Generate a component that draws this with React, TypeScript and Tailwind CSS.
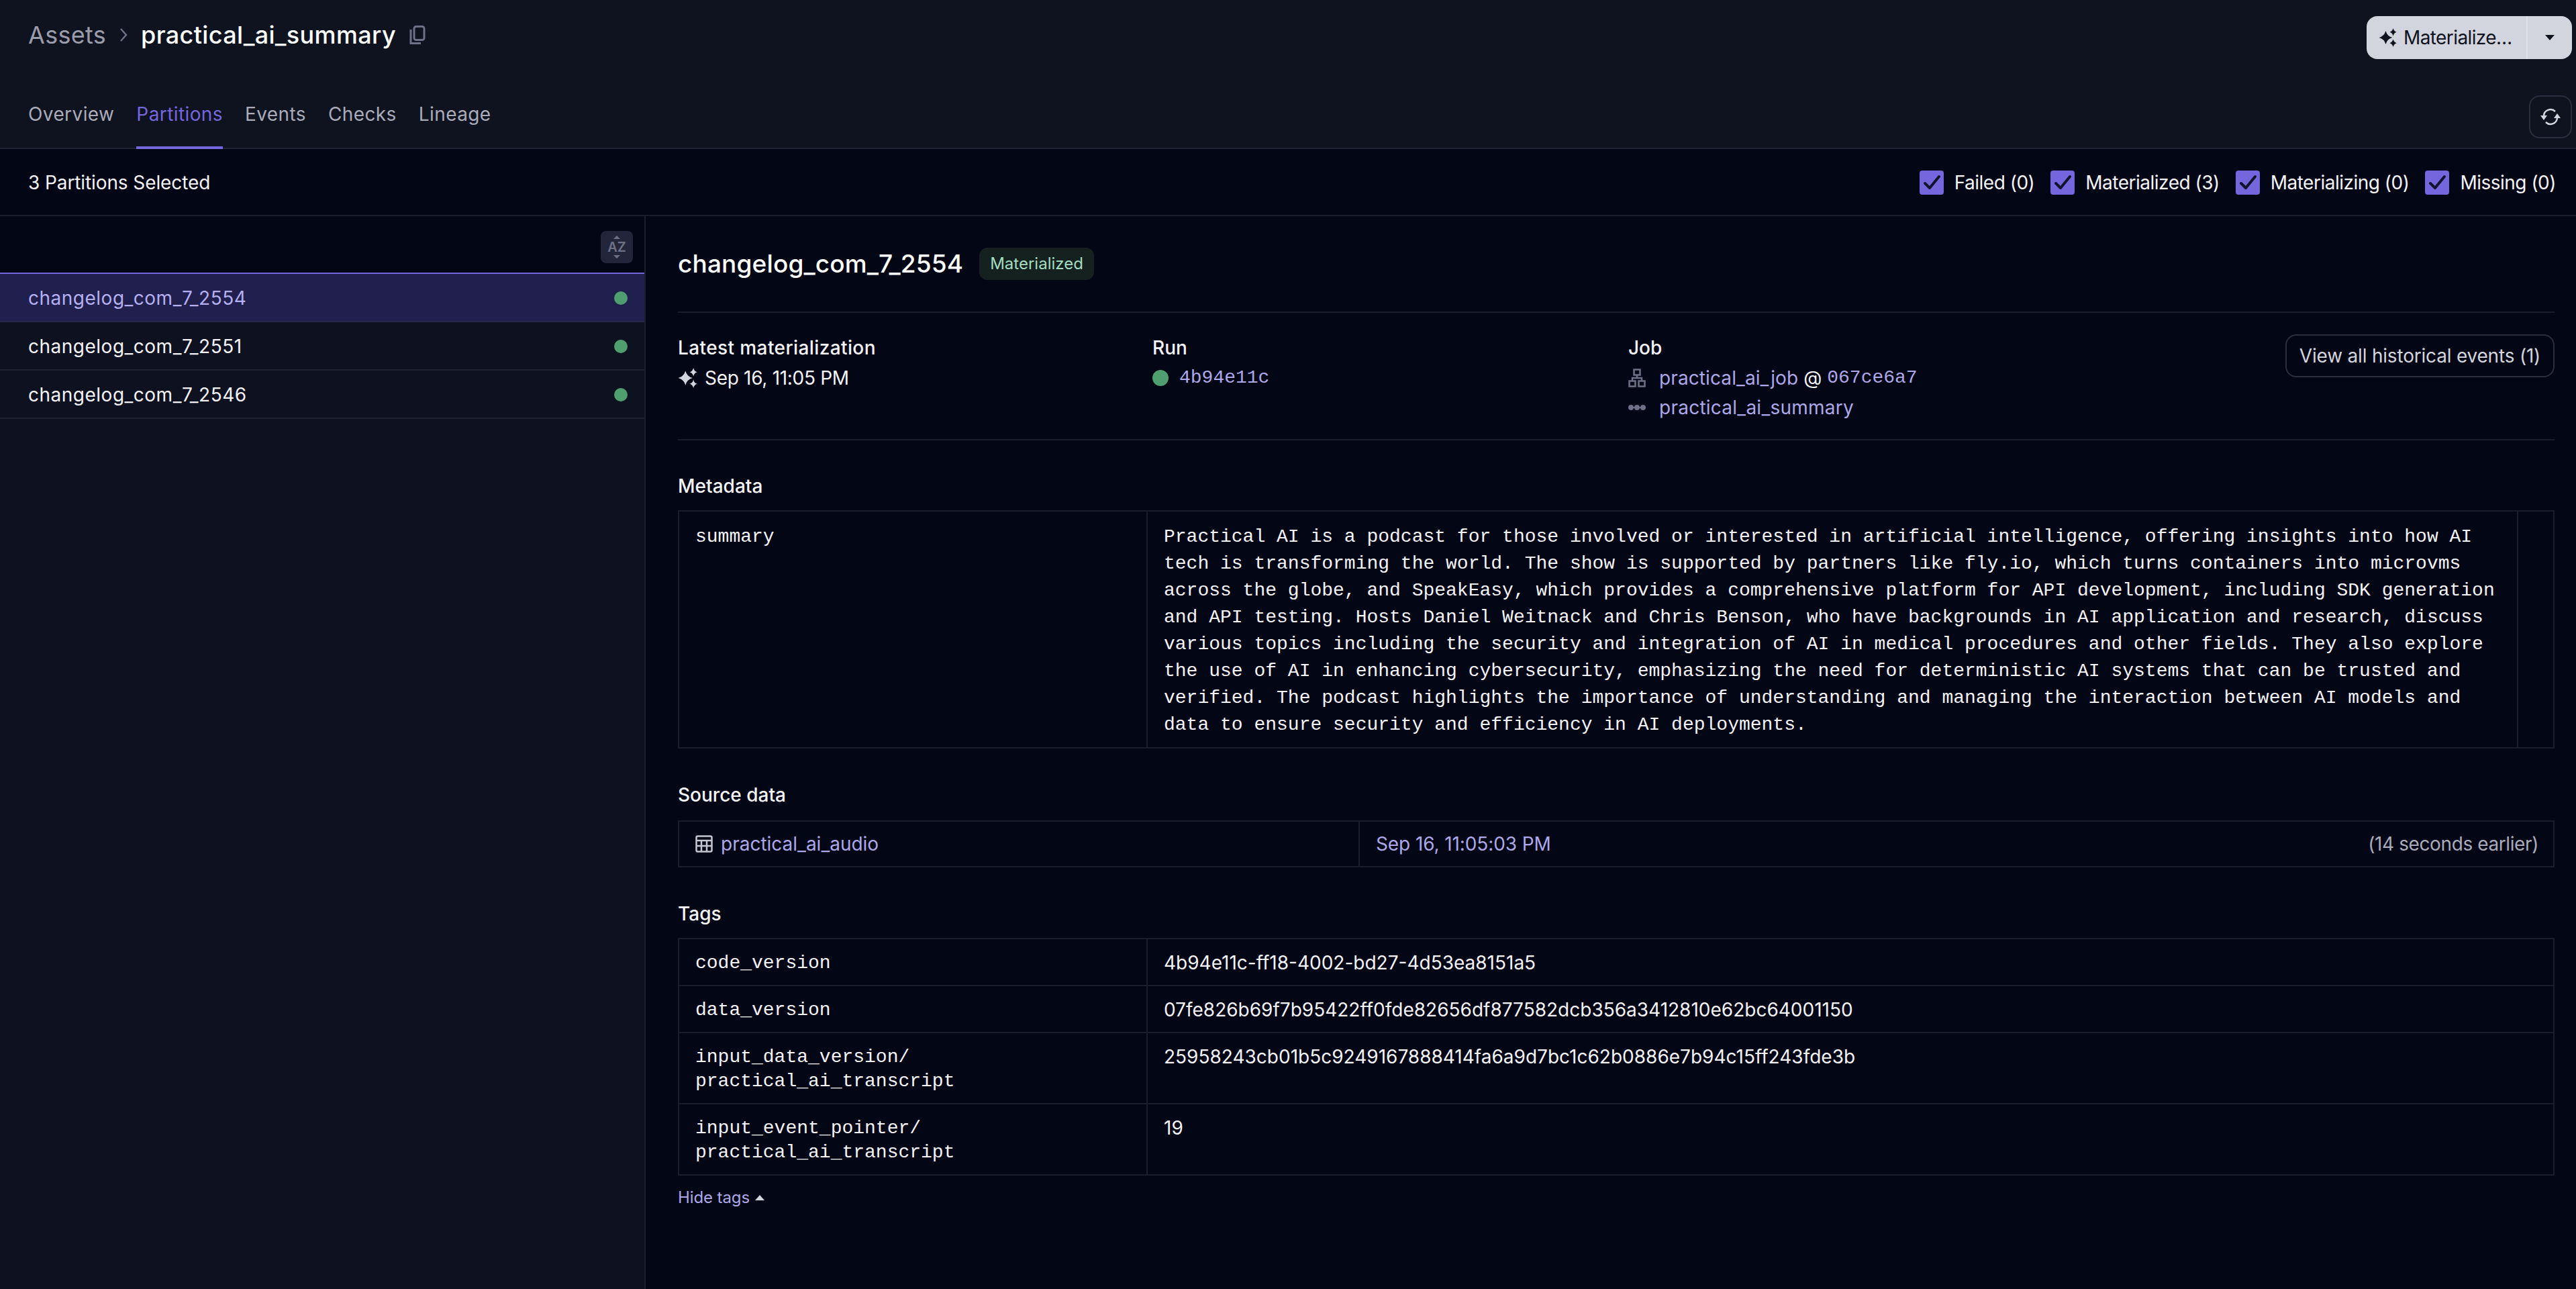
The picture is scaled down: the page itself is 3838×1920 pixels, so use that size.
const summary =
  "Practical AI is a podcast for those involved or interested in artificial intelligence, offering insights into how AI tech is transforming the world. The show is supported by partners like fly.io, which turns containers into microvms across the globe, and SpeakEasy, which provides a comprehensive platform for API development, including SDK generation and API testing. Hosts Daniel Weitnack and Chris Benson, who have backgrounds in AI application and research, discuss various topics including the security and integration of AI in medical procedures and other fields. They also explore the use of AI in enhancing cybersecurity, emphasizing the need for deterministic AI systems that can be trusted and verified. The podcast highlights the importance of understanding and managing the interaction between AI models and data to ensure security and efficiency in AI deployments.";

const tabs = ["Overview", "Partitions", "Events", "Checks", "Lineage"];
const filters = ["Failed (0)", "Materialized (3)", "Materializing (0)", "Missing (0)"];
const partitions = ["changelog_com_7_2554", "changelog_com_7_2551", "changelog_com_7_2546"];
const tags = [
  { key: ["code_version"], value: "4b94e11c-ff18-4002-bd27-4d53ea8151a5" },
  { key: ["data_version"], value: "07fe826b69f7b95422ff0fde82656df877582dcb356a3412810e62bc64001150" },
  { key: ["input_data_version/", "practical_ai_transcript"], value: "25958243cb01b5c9249167888414fa6a9d7bc1c62b0886e7b94c15ff243fde3b" },
  { key: ["input_event_pointer/", "practical_ai_transcript"], value: "19" },
];

const mono = "font-['Liberation_Mono',monospace] text-[28px]";

function Sparkle({ className }: { className: string }) {
  return (
    <svg viewBox="0 0 24 24" fill="currentColor" className={className}>
      <path d="M9 3.5 Q10.8 10.2 17.5 12 Q10.8 13.8 9 20.5 Q7.2 13.8 0.5 12 Q7.2 10.2 9 3.5Z" />
      <path d="M18.5 0 Q19.4 4.1 23 5 Q19.4 5.9 18.5 10 Q17.6 5.9 14 5 Q17.6 4.1 18.5 0Z" />
      <path d="M18.5 14 Q19.4 18.1 23 19 Q19.4 19.9 18.5 24 Q17.6 19.9 14 19 Q17.6 18.1 18.5 14Z" />
    </svg>
  );
}

function Check() {
  return (
    <div className="flex h-9 w-9 items-center justify-center rounded-[4px] bg-[#7566de]">
      <svg viewBox="0 0 36 36" fill="none" className="h-9 w-9">
        <path d="M8 19 L15 26 L29 9" stroke="#11142a" strokeWidth="4" strokeLinecap="round" strokeLinejoin="round" />
      </svg>
    </div>
  );
}

export default function App() {
  return (
    <div className="flex h-[1920px] w-[3838px] flex-col overflow-hidden bg-[#030614] font-['Inter',sans-serif] text-[28px] text-[#f3f3f7]">
      <header className="h-[222px] border-b-2 border-[#1f2231] bg-[#0f1320]">
        <div className="flex h-[122px] items-start justify-between pl-[42px] pr-[6px] pt-6">
          <div className="flex h-14 items-center text-[36px]">
            <span className="tracking-[0.3px] text-[#9a9cab]">Assets</span>
            <svg viewBox="0 0 14 24" fill="none" className="mx-[19px] h-6 w-[14px]">
              <path d="M3 3 L11 12 L3 21" stroke="#6c7187" strokeWidth="2.5" />
            </svg>
            <span className="font-medium tracking-[0.35px] text-white">practical_ai_summary</span>
            <svg viewBox="0 0 24 28" fill="none" stroke="#6c7187" strokeWidth="3" className="ml-[20px] h-7 w-6">
              <rect x="7" y="1.5" width="15" height="20" rx="3" />
              <path d="M2 6 V26.5 H17" />
            </svg>
          </div>
          <div className="flex h-16 w-[306px] rounded-2xl bg-[#d2d5dd] text-[#0f1320]">
            <div className="flex w-[240px] items-center gap-[9px] border-r-2 border-[#dfe1e7] pl-[18px]">
              <Sparkle className="h-7 w-7 shrink-0" />
              <span className="tracking-[-0.6px]">Materialize…</span>
            </div>
            <div className="flex flex-1 items-center justify-center">
              <svg viewBox="0 0 14 8" fill="currentColor" className="h-2 w-[14px]">
                <path d="M0 0 H14 L7 8Z" />
              </svg>
            </div>
          </div>
        </div>
        <div className="flex h-[98px] items-end justify-between pl-[42px] pr-[6px]">
          <div className="flex gap-[33px] tracking-[0.4px]">
            {tabs.map((tab) => (
              <div
                key={tab}
                className={
                  tab === "Partitions"
                    ? "-mb-[2px] flex h-[100px] items-center border-b-4 border-[#7566de] text-[#7566de]"
                    : "-mb-[2px] flex h-[100px] items-center border-b-4 border-transparent text-[#a9abba]"
                }
              >
                {tab}
              </div>
            ))}
          </div>
          <div className="mb-[14px] flex h-16 w-16 items-center justify-center rounded-2xl border-2 border-[#2b2e3f]">
            <svg viewBox="0 0 32 28" fill="none" className="h-7 w-8">
              <path d="M6 13 A10 10 0 0 1 23 6" stroke="#d2d5dd" strokeWidth="2.5" />
              <path d="M26 15 A10 10 0 0 1 9 22" stroke="#d2d5dd" strokeWidth="2.5" />
              <path d="M1 12 H11 L6 19Z M21 16 H31 L26 9Z" fill="#d2d5dd" />
            </svg>
          </div>
        </div>
      </header>

      <div className="flex h-[100px] items-center justify-between border-b-2 border-[#1a1d2b] pl-[42px] pr-[30px] pt-[2px]">
        <span className="tracking-[-0.1px]">3 Partitions Selected</span>
        <div className="flex gap-6 tracking-[-0.5px]">
          {filters.map((label) => (
            <div key={label} className="flex items-center gap-4">
              <Check />
              <span>{label}</span>
            </div>
          ))}
        </div>
      </div>

      <div className="flex min-h-0 flex-1">
        <aside className="flex w-[962px] flex-col border-r-2 border-[#1a1d2b] bg-[#0e1220]">
          <div className="flex h-[84px] items-start justify-end bg-[#030614] pr-[17px] pt-[22px]">
            <div className="flex h-12 w-12 flex-col items-center justify-center rounded-lg bg-[#23263a] text-[#6c7187]">
              <svg viewBox="0 0 10 5" fill="currentColor" className="h-[5px] w-[10px]">
                <path d="M0 5 L5 0 L10 5Z" />
              </svg>
              <span className="text-[20px] font-semibold leading-[24px]">AZ</span>
              <svg viewBox="0 0 10 5" fill="currentColor" className="h-[5px] w-[10px]">
                <path d="M0 0 L5 5 L10 0Z" />
              </svg>
            </div>
          </div>
          {partitions.map((name, i) => (
            <div
              key={name}
              className={
                i === 0
                  ? "flex h-[74px] items-center justify-between border-y-2 border-t-[#7566de] border-b-[#262849] bg-[#211f4e] pl-[42px] pr-[25px] pt-[2px] text-[#b5aff0]"
                  : "flex h-[72px] items-center justify-between border-b-2 border-[#1c2030] pl-[42px] pr-[25px] pt-[2px]"
              }
            >
              <span className="tracking-[0.5px]">{name}</span>
              <div className="h-5 w-5 rounded-full bg-[#4f9e6f]" />
            </div>
          ))}
        </aside>

        <main className="min-w-0 flex-1 pl-[48px] pr-[32px]">
          <div className="flex h-[144px] items-center gap-6 border-b-2 border-[#1a1d2b]">
            <span className="text-[37px] font-medium tracking-[0.15px] text-white">changelog_com_7_2554</span>
            <span className="flex h-12 items-center rounded-xl bg-[#14211f] px-4 text-[24px] text-[#a3dcc0]">Materialized</span>
          </div>

          <div className="flex h-[190px] border-b-2 border-[#1a1d2b] pt-[34px]">
            <div className="w-[707px]">
              <div className="h-9 font-medium leading-9 tracking-[0.4px]">Latest materialization</div>
              <div className="mt-[9px] flex h-9 items-center gap-[10px]">
                <Sparkle className="h-[30px] w-[30px] text-[#d2d5dd]" />
                <span className="tracking-[-0.3px]">Sep 16, 11:05 PM</span>
              </div>
            </div>
            <div className="w-[709px]">
              <div className="h-9 font-medium leading-9">Run</div>
              <div className="mt-[9px] flex h-9 items-center gap-4">
                <div className="h-6 w-6 rounded-full bg-[#4f9e6f]" />
                <span className={`${mono} text-[#aca8ea]`}>4b94e11c</span>
              </div>
            </div>
            <div className="flex-1">
              <div className="h-9 font-medium leading-9">Job</div>
              <div className="mt-[9px] flex h-9 items-center gap-[20px]">
                <svg viewBox="0 0 26 28" fill="none" stroke="#6c7187" strokeWidth="2.5" className="h-7 w-[26px]">
                  <rect x="8.5" y="1.5" width="9" height="8" />
                  <rect x="1.5" y="18.5" width="9" height="8" />
                  <rect x="15.5" y="18.5" width="9" height="8" />
                  <path d="M13 10 V14 H6 V18 M13 14 H20 V18" />
                </svg>
                <span className="flex items-center gap-2">
                  <span className="tracking-[0.1px] text-[#aca8ea]">practical_ai_job</span>
                  <span>@</span>
                  <span className={`${mono} text-[#aca8ea]`}>067ce6a7</span>
                </span>
              </div>
              <div className="mt-2 flex h-9 items-center gap-[20px]">
                <svg viewBox="0 0 26 10" fill="#6c7187" className="h-[10px] w-[26px]">
                  <circle cx="4" cy="5" r="4" />
                  <circle cx="13" cy="5" r="4" />
                  <circle cx="22" cy="5" r="4" />
                  <rect x="2" y="4" width="22" height="2" />
                </svg>
                <span className="tracking-[0.25px] text-[#aca8ea]">practical_ai_summary</span>
              </div>
            </div>
            <div className="-mt-[2px] flex h-16 w-[401px] items-center justify-center rounded-2xl border-2 border-[#2b2e3f] tracking-[-0.2px] text-[#d2d5dd]">
              View all historical events (1)
            </div>
          </div>

          <div className="mb-[18px] mt-[50px] h-9 font-medium leading-9">Metadata</div>
          <div className="flex border-2 border-[#1a1d2b]">
            <div className={`${mono} w-[698px] shrink-0 border-r-2 border-[#1a1d2b] px-6 pb-[13px] pt-[18px] leading-[40px]`}>summary</div>
            <div className={`${mono} flex-1 border-r-2 border-[#1a1d2b] pb-[13px] pl-6 pr-[26px] pt-[18px] leading-[40px]`}>{summary}</div>
            <div className="w-[52px] shrink-0" />
          </div>

          <div className="mb-5 mt-[51px] h-9 font-medium leading-9">Source data</div>
          <div className="flex h-[70px] border-2 border-[#1a1d2b]">
            <div className="flex w-[1014px] shrink-0 items-center gap-[12px] border-r-2 border-[#1a1d2b] px-6">
              <svg viewBox="0 0 26 26" fill="none" stroke="#c5c6d1" strokeWidth="2.5" className="h-[26px] w-[26px]">
                <rect x="1.5" y="1.5" width="23" height="23" rx="2" />
                <path d="M1.5 8 H24.5 M1.5 16 H24.5 M9 8 V24.5 M17 8 V24.5" />
              </svg>
              <span className="text-[#aca8ea]">practical_ai_audio</span>
            </div>
            <div className="flex flex-1 items-center justify-between pl-6 pr-[22px]">
              <span className="tracking-[-0.1px] text-[#aca8ea]">Sep 16, 11:05:03 PM</span>
              <span className="tracking-[-0.4px] text-[#a9abba]">(14 seconds earlier)</span>
            </div>
          </div>

          <div className="mb-[18px] mt-[51px] h-9 font-medium leading-9">Tags</div>
          <div className="border-x-2 border-t-2 border-[#1a1d2b]">
            {tags.map((tag) => (
              <div key={tag.value} className="flex border-b-2 border-[#1a1d2b]">
                <div className={`${mono} w-[698px] shrink-0 border-r-2 border-[#1a1d2b] px-6 pb-[14px] pt-[18px] leading-9`}>
                  {tag.key.map((line) => (
                    <div key={line}>{line}</div>
                  ))}
                </div>
                <div className="flex-1 px-6 pb-[15px] pt-[17px] leading-9">{tag.value}</div>
              </div>
            ))}
          </div>
          <div className="mt-[17px] flex items-center gap-2 text-[24px] leading-8 tracking-[-0.1px] text-[#aca8ea]">
            <span>Hide tags</span>
            <svg viewBox="0 0 14 8" fill="#d2d5dd" className="h-2 w-[14px]">
              <path d="M0 8 L7 0 L14 8Z" />
            </svg>
          </div>
        </main>
      </div>
    </div>
  );
}
